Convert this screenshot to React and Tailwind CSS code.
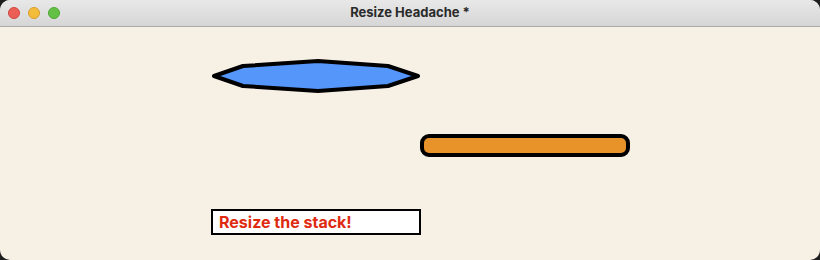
export default function App() {
    return (
        <div className="w-[820px] h-[260px] bg-[#1e1e1e]">
            <div className="w-full h-full rounded-[10px] overflow-hidden flex flex-col bg-[#f7f0e4]" style={{ fontFamily: 'Inter, "Liberation Sans", sans-serif' }}>
                <div className="h-[27px] shrink-0 relative flex items-center justify-center bg-gradient-to-b from-[#e8e8e8] to-[#d6d6d6] border-b border-[#a9a9a9]">
                    <div className="absolute left-[8px] top-[7px] flex gap-[8px]">
                        <span className="w-[12px] h-[12px] rounded-full bg-[#ec5f57] border border-[#d0463f]" />
                        <span className="w-[12px] h-[12px] rounded-full bg-[#f3bc3b] border border-[#d69e2b]" />
                        <span className="w-[12px] h-[12px] rounded-full bg-[#63c146] border border-[#4fa533]" />
                    </div>
                    <span className="text-[13px] font-bold text-[#2a2a2a]">Resize Headache *</span>
                </div>
                <div className="relative flex-1">
                    <svg className="absolute left-0 top-0" width="820" height="233">
                        <polygon
                            points="214,49 243,39 318,34 388,39 418,49 388,59 318,64 243,59"
                            fill="#5596fb"
                            stroke="#000"
                            strokeWidth="4"
                            strokeLinejoin="round"
                        />
                    </svg>
                    <div className="absolute left-[420px] top-[107px] w-[210px] h-[23px] rounded-[9px] border-4 border-black bg-[#e8922a]" />
                    <div className="absolute left-[211px] top-[182px] w-[210px] h-[26px] border-2 border-black bg-white flex items-center px-[6px]">
                        <span className="text-[16px] font-bold text-[#df2a10]">Resize the stack!</span>
                    </div>
                </div>
            </div>
        </div>
    );
}
